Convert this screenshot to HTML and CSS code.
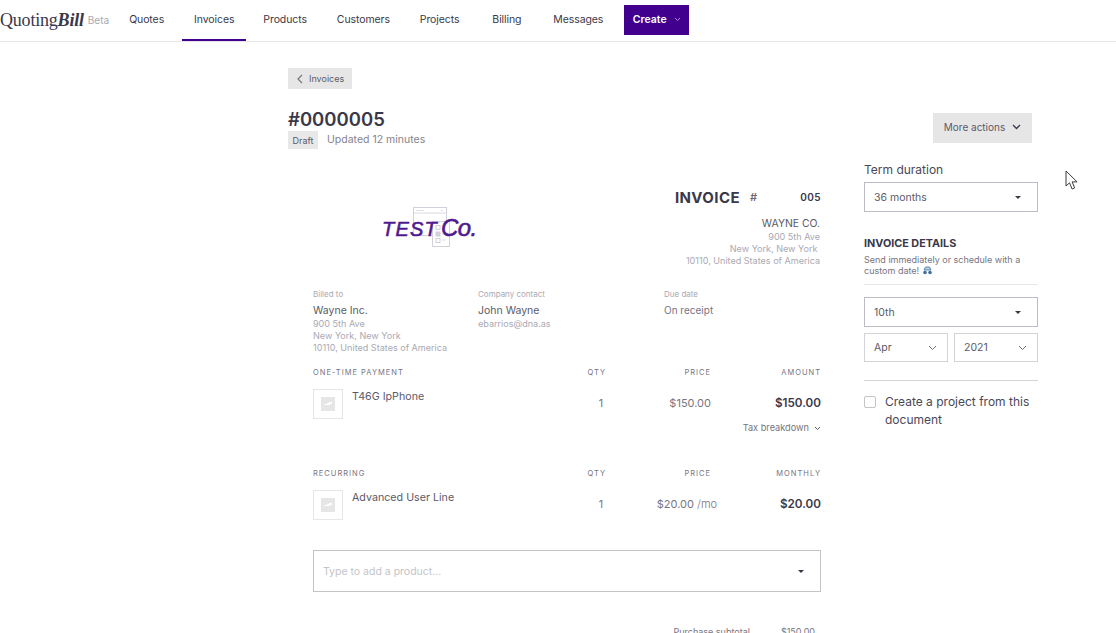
FILE: index.html
```html
<!DOCTYPE html>
<html lang="en">
<head>
    <meta charset="UTF-8">
    <meta name="viewport" content="width=device-width, initial-scale=1.0">
    <title>QuotingBill - Invoice #0000005</title>
    <link rel="stylesheet" href="styles.css">
</head>
<body>
    <header class="topbar">
        <div class="brand">Quoting<b>Bill</b></div>
        <span class="beta">Beta</span>
        <nav class="nav">
            <a class="nav-item">Quotes</a>
            <a class="nav-item active">Invoices</a>
            <a class="nav-item">Products</a>
            <a class="nav-item">Customers</a>
            <a class="nav-item">Projects</a>
            <a class="nav-item">Billing</a>
            <a class="nav-item">Messages</a>
        </nav>
        <button class="create-btn">Create
            <svg width="7" height="5" viewBox="0 0 7 5"><path d="M1 1l2.5 2.5L6 1" fill="none" stroke="#a98fc9" stroke-width="1"/></svg>
        </button>
    </header>

    <main class="page">
        <section class="doc">
            <a class="back-btn">
                <svg width="6" height="10" viewBox="0 0 6 10"><path d="M5 1L1 5l4 4" fill="none" stroke="#77757f" stroke-width="1.2"/></svg>
                Invoices
            </a>
            <h1 class="doc-title">#0000005</h1>
            <div class="doc-status">
                <span class="badge">Draft</span>
                <span class="updated">Updated 12 minutes</span>
            </div>

            <div class="paper">
                <div class="paper-head">
                    <div class="logo">
                        <svg class="logo-sketch" width="40" height="42" viewBox="0 0 40 42" fill="#fff" stroke="#d2d1d9" stroke-width="1">
                            <rect x="0.5" y="0.5" width="33" height="28"/>
                            <path d="M1 6h32" stroke-width="0.8"/>
                            <path d="M3 3.5h8M28 3.5h2" stroke-width="0.7"/>
                            <rect x="19.5" y="14.5" width="17" height="25"/>
                            <rect x="23" y="18.5" width="4" height="4"/>
                            <rect x="23" y="25" width="4" height="4" fill="#d2d1d9"/>
                            <rect x="23" y="31.5" width="4" height="4"/>
                            <path d="M29 27h5M29 33h4" stroke-width="0.7"/>
                        </svg>
                        <span class="logo-text">TEST<em>Co.</em></span>
                    </div>
                    <div class="sender">
                        <div class="invoice-line">
                            <span class="invoice-word">INVOICE</span>
                            <span class="invoice-hash">#</span>
                            <span class="invoice-no">005</span>
                        </div>
                        <div class="sender-name">WAYNE CO.</div>
                        <div class="small-line">900 5th Ave</div>
                        <div class="small-line">New York, New York&nbsp;</div>
                        <div class="small-line">10110, United States of America</div>
                    </div>
                </div>

                <div class="parties">
                    <div class="party party-billed">
                        <div class="party-label">Billed to</div>
                        <div class="party-name">Wayne Inc.</div>
                        <div class="small-line">900 5th Ave</div>
                        <div class="small-line">New York, New York</div>
                        <div class="small-line">10110, United States of America</div>
                    </div>
                    <div class="party party-contact">
                        <div class="party-label">Company contact</div>
                        <div class="party-name">John Wayne</div>
                        <div class="small-line">ebarrios@dna.as</div>
                    </div>
                    <div class="party">
                        <div class="party-label">Due date</div>
                        <div class="party-due">On receipt</div>
                    </div>
                </div>

                <div class="line-head">
                    <span>ONE-TIME PAYMENT</span><span>QTY</span><span>PRICE</span><span>AMOUNT</span>
                </div>
                <div class="line-row">
                    <div class="product">
                        <div class="thumb">
                            <svg width="14" height="14" viewBox="0 0 14 14"><rect width="14" height="14" fill="#e6e6e6"/><path d="M3 7h3V6h2V5h3v2H9v1H3z" fill="#fff"/></svg>
                        </div>
                        <span class="product-name">T46G IpPhone</span>
                    </div>
                    <span class="qty">1</span>
                    <span class="price">$150.00</span>
                    <span class="total">$150.00</span>
                </div>
                <div class="tax">Tax breakdown
                    <svg width="7" height="5" viewBox="0 0 7 5"><path d="M1 1l2.5 2.5L6 1" fill="none" stroke="#5c5a68" stroke-width="1"/></svg>
                </div>

                <div class="line-head line-head-recurring">
                    <span>RECURRING</span><span>QTY</span><span>PRICE</span><span>MONTHLY</span>
                </div>
                <div class="line-row">
                    <div class="product">
                        <div class="thumb">
                            <svg width="14" height="14" viewBox="0 0 14 14"><rect width="14" height="14" fill="#e6e6e6"/><path d="M3 7h3V6h2V5h3v2H9v1H3z" fill="#fff"/></svg>
                        </div>
                        <span class="product-name">Advanced User Line</span>
                    </div>
                    <span class="qty">1</span>
                    <span class="price">$20.00 <small>/mo</small></span>
                    <span class="total">$20.00</span>
                </div>

                <div class="product-select">
                    <span>Type to add a product...</span>
                    <i class="caret"></i>
                </div>

                <div class="subtotal">
                    <span>Purchase subtotal</span>
                    <span>$150.00</span>
                </div>
            </div>
        </section>

        <aside class="side">
            <button class="more-btn">More actions
                <svg width="9" height="6" viewBox="0 0 9 6"><path d="M1 1l3.5 3.5L8 1" fill="none" stroke="#3a3849" stroke-width="1.3"/></svg>
            </button>
            <label class="field-label">Term duration</label>
            <div class="select"><span>36 months</span><i class="caret"></i></div>

            <h2 class="side-title">INVOICE DETAILS</h2>
            <p class="side-note">Send immediately or schedule with a custom date!
                <svg width="11" height="9" viewBox="0 0 11 9"><path d="M2 4l1.5-3h4L9 4z" fill="#b5d2e8" stroke="#3f6f9c" stroke-width="0.8"/><circle cx="3" cy="6.5" r="1.8" fill="#3f6f9c"/><circle cx="8" cy="6.5" r="1.8" fill="#3f6f9c"/></svg>
            </p>
            <div class="select select-day"><span>10th</span><i class="caret"></i></div>
            <div class="date-pair">
                <div class="select select-small"><span>Apr</span>
                    <svg width="9" height="6" viewBox="0 0 9 6"><path d="M1 1l3.5 3.5L8 1" fill="none" stroke="#6d6b78" stroke-width="1"/></svg>
                </div>
                <div class="select select-small"><span>2021</span>
                    <svg width="9" height="6" viewBox="0 0 9 6"><path d="M1 1l3.5 3.5L8 1" fill="none" stroke="#6d6b78" stroke-width="1"/></svg>
                </div>
            </div>
            <div class="check-row">
                <span class="checkbox"></span>
                <span>Create a project from this document</span>
            </div>
        </aside>
    </main>

    <svg class="cursor" width="14" height="21" viewBox="0 0 14 21"><path d="M1 1v15l3.5-3.2 2.6 6.2 2.6-1.1-2.6-6h5z" fill="#fff" stroke="#3a3a3a" stroke-width="1"/></svg>
</body>
</html>
```

FILE: styles.css
```css
html, body {
    height: 100%;
    margin: 0;
    overflow: hidden;
}
body {
    font-family: Inter, "Noto Sans", sans-serif;
    color: #3a3849;
    background-color: #fff;
    position: relative;
}
button {
    font-family: inherit;
    border: 0;
    cursor: pointer;
}
.topbar {
    height: 41px;
    display: flex;
    align-items: center;
    border-bottom: 1px solid #e6e6e6;
}
.brand {
    font-family: "Liberation Serif", serif;
    font-size: 18px;
    color: #3a3849;
    letter-spacing: -0.2px;
    margin-top: -1px;
}
.brand b {
    font-style: italic;
}
.beta {
    font-size: 10px;
    color: #aaa9b3;
    margin-left: 4px;
    margin-top: -1px;
}
.nav {
    display: flex;
    height: 100%;
    margin-left: 8px;
}
.nav-item {
    display: flex;
    align-items: center;
    font-size: 10.5px;
    letter-spacing: -0.1px;
    padding: 0 12px;
    margin-right: 6px;
    color: #3a3849;
    box-sizing: border-box;
    border-bottom: 2px solid transparent;
}
.nav-item:nth-child(2) {
    margin-right: 5px;
}
.nav-item:nth-child(5) {
    margin-right: 9px;
}
.nav-item:nth-child(6) {
    margin-right: 8px;
}
.nav-item:last-child {
    margin-right: 0;
}
.nav-item.active {
    border-bottom-color: #42008f;
}
.create-btn {
    width: 65px;
    height: 30px;
    margin: 0 0 1px 9px;
    padding: 0 0 1px;
    background-color: #42008f;
    color: #fff;
    font-size: 10.5px;
    font-weight: 600;
    display: flex;
    align-items: center;
    justify-content: center;
    gap: 7px;
}

.page {
    display: flex;
    padding: 26px 0 0 288px;
}
.doc {
    width: 533px;
}
.back-btn {
    display: flex;
    align-items: center;
    gap: 6px;
    height: 21px;
    width: 64px;
    box-sizing: border-box;
    padding-left: 9px;
    background-color: #e6e6e6;
    color: #5c5a68;
    font-size: 9px;
}
.doc-title {
    font-size: 18.5px;
    font-weight: 600;
    line-height: 24px;
    margin: 18px 0 0;
}
.doc-status {
    display: flex;
    align-items: center;
    gap: 9px;
}
.badge {
    width: 30px;
    height: 18px;
    line-height: 19px;
    text-align: center;
    background-color: #e8e8e8;
    font-size: 9px;
    color: #5c5a68;
}
.updated {
    font-size: 10.5px;
    color: #85838d;
    margin-top: -2px;
}

.paper {
    padding-left: 25px;
}
.paper-head {
    display: flex;
    justify-content: space-between;
    padding-top: 38px;
}
.logo {
    position: relative;
    width: 94px;
    height: 42px;
    margin: 20px 0 0 69px;
}
.logo-sketch {
    position: absolute;
    left: 31px;
    top: 0;
}
.logo-text {
    position: absolute;
    left: 0;
    top: 7px;
    font-family: "Liberation Sans", sans-serif;
    font-style: italic;
    font-size: 20px;
    letter-spacing: 1.2px;
    -webkit-text-stroke: 0.6px #4f1a8f;
    color: #4f1a8f;
    white-space: nowrap;
}
.logo-text em {
    font-size: 24px;
    letter-spacing: -0.5px;
    margin-left: 3px;
}
.sender {
    text-align: right;
    padding-right: 1px;
}
.invoice-line {
    display: flex;
    align-items: center;
    justify-content: flex-end;
    height: 20px;
    margin: 0 -1px 10px 0;
}
.invoice-word {
    font-size: 15px;
    font-weight: 700;
    letter-spacing: 0.4px;
}
.invoice-hash {
    font-size: 11px;
    font-weight: 600;
    color: #6d6b78;
    margin-left: 10px;
}
.invoice-no {
    font-size: 10px;
    font-weight: 600;
    margin-left: 43px;
    letter-spacing: 0.4px;
    width: 21px;
}
.sender-name {
    font-size: 10.4px;
    line-height: 14px;
    color: #5c5a68;
}
.small-line {
    font-size: 9.05px;
    line-height: 12px;
    color: #aaa9b3;
}

.parties {
    display: flex;
    margin-top: 21px;
}
.party-billed {
    width: 165px;
}
.party-contact {
    width: 186px;
}
.party-label {
    font-size: 8px;
    line-height: 12px;
    color: #aaa9b3;
}
.party-name {
    font-size: 10.5px;
    line-height: 15px;
    margin-top: 3px;
    color: #5c5a68;
}
.party-due {
    font-size: 10px;
    line-height: 14px;
    margin-top: 3px;
    color: #77757f;
}

.line-head, .line-row {
    display: grid;
    grid-template-columns: 1fr 26px 105px 110px;
}
.line-head {
    font-size: 7.5px;
    letter-spacing: 1px;
    line-height: 12px;
    color: #77757f;
    margin-top: 13px;
}
.line-head span:nth-child(n+2) {
    text-align: right;
}
.line-row {
    margin-top: 10px;
    align-items: center;
    font-size: 10.7px;
    color: #77757f;
}
.product {
    display: flex;
    align-items: flex-start;
    gap: 9px;
}
.thumb {
    width: 28px;
    height: 28px;
    border: 1px solid #e6e6e6;
    display: flex;
    align-items: center;
    justify-content: center;
}
.product-name {
    color: #5c5a68;
    line-height: 14px;
    margin-top: 1px;
}
.qty {
    text-align: right;
    padding: 0 3px 2px 0;
}
.price {
    text-align: right;
    font-size: 11px;
    padding-bottom: 2px;
}
.price small {
    font-size: 11px;
    font-weight: 300;
    margin-right: -6px;
}
.total {
    text-align: right;
    font-size: 11.7px;
    font-weight: 600;
    padding-bottom: 2px;
    color: #3a3849;
}
.tax {
    display: flex;
    justify-content: flex-end;
    align-items: center;
    gap: 5px;
    font-size: 9.2px;
    line-height: 12px;
    color: #77757f;
    margin-top: 3px;
}
.line-head-recurring {
    margin-top: 34px;
}
.caret {
    width: 0;
    height: 0;
    border-left: 3.5px solid transparent;
    border-right: 3.5px solid transparent;
    border-top: 3px solid #3a3849;
}
.product-select {
    height: 42px;
    box-sizing: border-box;
    margin-top: 30px;
    border: 1px solid #c4c4c8;
    display: flex;
    align-items: center;
    justify-content: space-between;
    padding: 0 16px 0 9px;
    font-size: 10.5px;
    color: #c4c4c8;
}
.subtotal {
    display: flex;
    justify-content: flex-end;
    gap: 31px;
    padding-right: 6px;
    margin-top: 34px;
    font-size: 9px;
    color: #77757f;
}

.side {
    width: 174px;
    margin-left: 43px;
    display: flex;
    flex-direction: column;
    padding-top: 45px;
}
.more-btn {
    align-self: flex-end;
    margin-right: 6px;
    width: 99px;
    height: 30px;
    padding: 0 0 3px;
    background-color: #e6e6e6;
    color: #5c5a68;
    font-size: 10px;
    display: flex;
    align-items: center;
    justify-content: center;
    gap: 7px;
}
.field-label {
    font-size: 12px;
    line-height: 14px;
    margin-top: 20px;
    color: #4a4857;
}
.select {
    display: flex;
    align-items: center;
    justify-content: space-between;
    box-sizing: border-box;
    height: 30px;
    padding: 0 16px 0 9px;
    margin-top: 5px;
    border: 1px solid #bdbcc4;
    font-size: 10.5px;
    color: #5c5a68;
}
.side-title {
    font-size: 10.8px;
    font-weight: 700;
    line-height: 14px;
    margin: 25px 0 0;
}
.side-note {
    font-size: 9px;
    line-height: 11px;
    color: #77757f;
    margin: 3px 0 0;
    padding-bottom: 8px;
    border-bottom: 1px solid #e6e6e6;
}
.side-note svg {
    vertical-align: -1px;
}
.select-day {
    margin-top: 12px;
}
.date-pair {
    display: flex;
    gap: 6px;
    margin-top: 6px;
    padding-bottom: 18px;
    border-bottom: 1px solid #d4d4d8;
}
.select-small {
    flex: 1;
    height: 29px;
    margin-top: 0;
    padding-right: 10px;
    border-color: #d4d4d8;
}
.check-row {
    display: flex;
    gap: 9px;
    margin-top: 12px;
    font-size: 12px;
    line-height: 18px;
    color: #4a4857;
}
.checkbox {
    flex: none;
    width: 12px;
    height: 12px;
    margin-top: 3px;
    box-sizing: border-box;
    border: 1px solid #c4c4c8;
    border-radius: 2px;
}
.cursor {
    position: absolute;
    left: 1065px;
    top: 170px;
}
```
